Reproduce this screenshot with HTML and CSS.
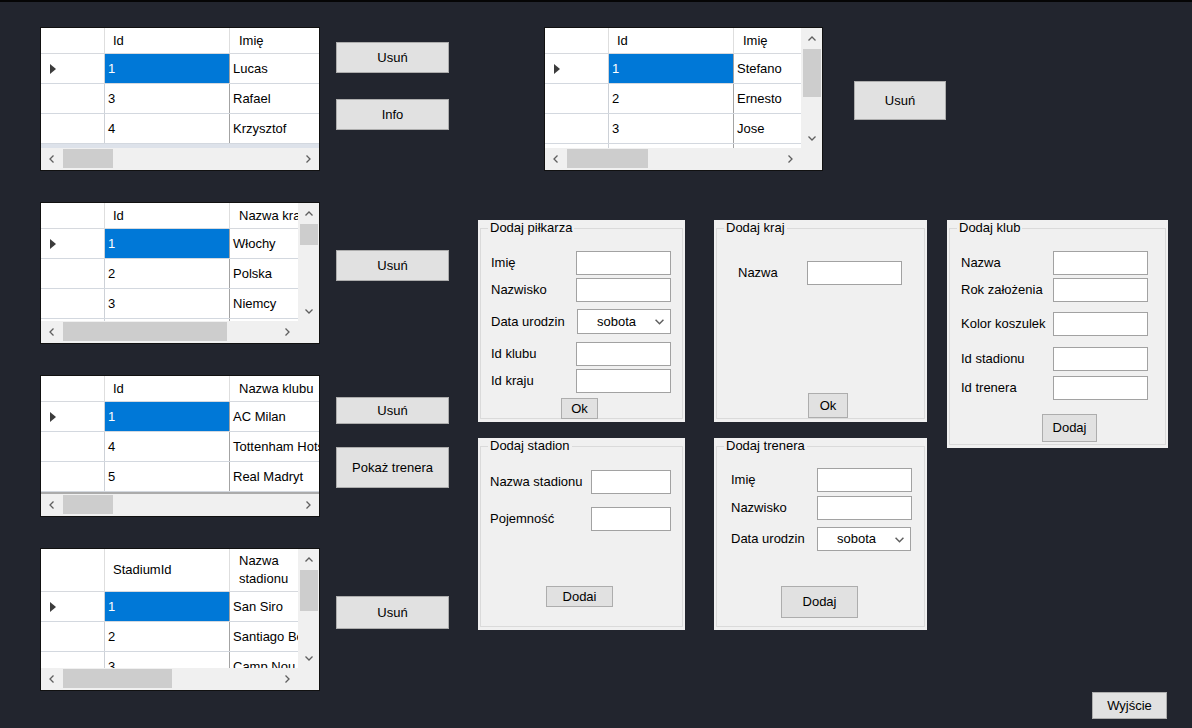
FILE: index.html
```html
<!DOCTYPE html>
<html lang="pl">
<head>
<meta charset="utf-8">
<title>Piłkarze</title>
<link rel="stylesheet" href="styles.css">
</head>
<body>
<svg class="defs" aria-hidden="true">
  <symbol id="chev-l" viewBox="0 0 8 8"><path d="M5.5 0.5L2 4l3.5 3.5" fill="none" stroke="#5f5f5f" stroke-width="1.3"/></symbol>
  <symbol id="chev-r" viewBox="0 0 8 8"><path d="M2.5 0.5L6 4L2.5 7.5" fill="none" stroke="#5f5f5f" stroke-width="1.3"/></symbol>
  <symbol id="chev-u" viewBox="0 0 8 8"><path d="M0.5 5.5L4 2l3.5 3.5" fill="none" stroke="#5f5f5f" stroke-width="1.3"/></symbol>
  <symbol id="chev-d" viewBox="0 0 8 8"><path d="M0.5 2.5L4 6l3.5-3.5" fill="none" stroke="#5f5f5f" stroke-width="1.3"/></symbol>
</svg>
<div class="form">
  <div class="col-grids">
    <div class="grid grid-players">
      <div class="grid-main">
        <div class="grid-view">
          <div class="gr gr-head"><div class="gc gc-rh"></div><div class="gc gc-id">Id</div><div class="gc gc-name">Imię</div></div>
          <div class="gr"><div class="gc gc-rh"><span class="cur"></span></div><div class="gc gc-id sel">1</div><div class="gc gc-name">Lucas</div></div>
          <div class="gr"><div class="gc gc-rh"></div><div class="gc gc-id">3</div><div class="gc gc-name">Rafael</div></div>
          <div class="gr"><div class="gc gc-rh"></div><div class="gc gc-id">4</div><div class="gc gc-name">Krzysztof</div></div>
          <div class="gr gr-partial"><div class="gc gc-rh"></div><div class="gc gc-id"></div><div class="gc gc-name"></div></div>
        </div>
      </div>
      <div class="hscroll">
        <span class="sb-btn"><svg><use href="#chev-l"/></svg></span>
        <div class="htrack"><div class="hthumb w50"></div></div>
        <span class="sb-btn"><svg><use href="#chev-r"/></svg></span>
      </div>
    </div>

    <div class="grid grid-countries">
      <div class="grid-main">
        <div class="grid-view">
          <div class="gr gr-head"><div class="gc gc-rh"></div><div class="gc gc-id">Id</div><div class="gc gc-name">Nazwa kraju</div></div>
          <div class="gr"><div class="gc gc-rh"><span class="cur"></span></div><div class="gc gc-id sel">1</div><div class="gc gc-name">Włochy</div></div>
          <div class="gr"><div class="gc gc-rh"></div><div class="gc gc-id">2</div><div class="gc gc-name">Polska</div></div>
          <div class="gr"><div class="gc gc-rh"></div><div class="gc gc-id">3</div><div class="gc gc-name">Niemcy</div></div>
          <div class="gr"><div class="gc gc-rh"></div><div class="gc gc-id"></div><div class="gc gc-name"></div></div>
        </div>
        <div class="vscroll">
          <span class="sb-btn"><svg><use href="#chev-u"/></svg></span>
          <div class="vtrack"><div class="vthumb h21"></div></div>
          <span class="sb-btn"><svg><use href="#chev-d"/></svg></span>
        </div>
      </div>
      <div class="hscroll">
        <span class="sb-btn"><svg><use href="#chev-l"/></svg></span>
        <div class="htrack"><div class="hthumb w164"></div></div>
        <span class="sb-btn"><svg><use href="#chev-r"/></svg></span>
        <span class="sb-corner"></span>
      </div>
    </div>

    <div class="grid grid-clubs">
      <div class="grid-main">
        <div class="grid-view">
          <div class="gr gr-head"><div class="gc gc-rh"></div><div class="gc gc-id">Id</div><div class="gc gc-name">Nazwa klubu</div></div>
          <div class="gr"><div class="gc gc-rh"><span class="cur"></span></div><div class="gc gc-id sel">1</div><div class="gc gc-name">AC Milan</div></div>
          <div class="gr"><div class="gc gc-rh"></div><div class="gc gc-id">4</div><div class="gc gc-name">Tottenham Hotspur</div></div>
          <div class="gr"><div class="gc gc-rh"></div><div class="gc gc-id">5</div><div class="gc gc-name">Real Madryt</div></div>
        </div>
      </div>
      <div class="hscroll">
        <span class="sb-btn"><svg><use href="#chev-l"/></svg></span>
        <div class="htrack"><div class="hthumb w50"></div></div>
        <span class="sb-btn"><svg><use href="#chev-r"/></svg></span>
      </div>
    </div>

    <div class="grid grid-stadiums">
      <div class="grid-main">
        <div class="grid-view">
          <div class="gr gr-head gr-tall"><div class="gc gc-rh"></div><div class="gc gc-id">StadiumId</div><div class="gc gc-name two-line">Nazwa<br>stadionu</div></div>
          <div class="gr"><div class="gc gc-rh"><span class="cur"></span></div><div class="gc gc-id sel">1</div><div class="gc gc-name">San Siro</div></div>
          <div class="gr"><div class="gc gc-rh"></div><div class="gc gc-id">2</div><div class="gc gc-name">Santiago Bernabeu</div></div>
          <div class="gr"><div class="gc gc-rh"></div><div class="gc gc-id">3</div><div class="gc gc-name">Camp Nou</div></div>
        </div>
        <div class="vscroll">
          <span class="sb-btn"><svg><use href="#chev-u"/></svg></span>
          <div class="vtrack"><div class="vthumb h41"></div></div>
          <span class="sb-btn"><svg><use href="#chev-d"/></svg></span>
        </div>
      </div>
      <div class="hscroll">
        <span class="sb-btn"><svg><use href="#chev-l"/></svg></span>
        <div class="htrack"><div class="hthumb w109"></div></div>
        <span class="sb-btn"><svg><use href="#chev-r"/></svg></span>
        <span class="sb-corner"></span>
      </div>
    </div>
  </div>

  <div class="col-buttons">
    <button class="btn mt15 h31">Usuń</button>
    <button class="btn mt26 h31">Info</button>
    <button class="btn mt120 h31">Usuń</button>
    <button class="btn mt116 h27">Usuń</button>
    <button class="btn mt23 h41">Pokaż trenera</button>
    <button class="btn mt108 h33">Usuń</button>
  </div>

  <div class="col-right">
    <div class="top-row">
      <div class="grid grid-coaches">
        <div class="grid-main">
          <div class="grid-view">
            <div class="gr gr-head"><div class="gc gc-rh"></div><div class="gc gc-id">Id</div><div class="gc gc-name">Imię</div></div>
            <div class="gr"><div class="gc gc-rh"><span class="cur"></span></div><div class="gc gc-id sel">1</div><div class="gc gc-name">Stefano</div></div>
            <div class="gr"><div class="gc gc-rh"></div><div class="gc gc-id">2</div><div class="gc gc-name">Ernesto</div></div>
            <div class="gr"><div class="gc gc-rh"></div><div class="gc gc-id">3</div><div class="gc gc-name">Jose</div></div>
            <div class="gr"><div class="gc gc-rh"></div><div class="gc gc-id"></div><div class="gc gc-name"></div></div>
          </div>
          <div class="vscroll">
            <span class="sb-btn"><svg><use href="#chev-u"/></svg></span>
            <div class="vtrack"><div class="vthumb h48"></div></div>
            <span class="sb-btn"><svg><use href="#chev-d"/></svg></span>
          </div>
        </div>
        <div class="hscroll">
          <span class="sb-btn"><svg><use href="#chev-l"/></svg></span>
          <div class="htrack"><div class="hthumb w81"></div></div>
          <span class="sb-btn"><svg><use href="#chev-r"/></svg></span>
          <span class="sb-corner"></span>
        </div>
      </div>
      <button class="btn btn-del-coach">Usuń</button>
    </div>

    <div class="groups">
      <section class="gb gb-player">
        <div class="gb-frame">
          <div class="gb-title">Dodaj piłkarza</div>
          <div class="gb-body f-player">
            <div class="frow mt15"><span class="lbl">Imię</span><span class="tb"></span></div>
            <div class="frow mt3"><span class="lbl">Nazwisko</span><span class="tb"></span></div>
            <div class="frow mt7"><span class="lbl">Data urodzin</span><span class="combo c25 c-shift">sobota<svg><use href="#chev-d"/></svg></span></div>
            <div class="frow mt8"><span class="lbl">Id klubu</span><span class="tb"></span></div>
            <div class="frow mt3"><span class="lbl">Id kraju</span><span class="tb"></span></div>
            <button class="btn fbtn mt5 ml70 b-ok1">Ok</button>
          </div>
        </div>
      </section>

      <section class="gb gb-country">
        <div class="gb-frame">
          <div class="gb-title">Dodaj kraj</div>
          <div class="gb-body f-country">
            <div class="frow mt25"><span class="lbl">Nazwa</span><span class="tb"></span></div>
            <button class="btn fbtn mt108 ml70 b-ok2">Ok</button>
          </div>
        </div>
      </section>

      <section class="gb gb-club">
        <div class="gb-frame">
          <div class="gb-title">Dodaj klub</div>
          <div class="gb-body f-club">
            <div class="frow mt15"><span class="lbl">Nazwa</span><span class="tb"></span></div>
            <div class="frow mt3"><span class="lbl">Rok założenia</span><span class="tb"></span></div>
            <div class="frow mt10"><span class="lbl">Kolor koszulek</span><span class="tb"></span></div>
            <div class="frow mt11"><span class="lbl">Id stadionu</span><span class="tb"></span></div>
            <div class="frow mt5"><span class="lbl">Id trenera</span><span class="tb"></span></div>
            <button class="btn fbtn mt14 ml81 b-club">Dodaj</button>
          </div>
        </div>
      </section>

      <section class="gb gb-stadium">
        <div class="gb-frame">
          <div class="gb-title">Dodaj stadion</div>
          <div class="gb-body f-stadium">
            <div class="frow mt16"><span class="lbl">Nazwa stadionu</span><span class="tb tb-s"></span></div>
            <div class="frow mt13"><span class="lbl">Pojemność</span><span class="tb tb-s"></span></div>
            <button class="btn fbtn mt55 ml56 b-stadium">Dodai</button>
          </div>
        </div>
      </section>

      <section class="gb gb-coach">
        <div class="gb-frame">
          <div class="gb-title">Dodaj trenera</div>
          <div class="gb-body f-coach">
            <div class="frow mt14"><span class="lbl">Imię</span><span class="tb"></span></div>
            <div class="frow mt4"><span class="lbl">Nazwisko</span><span class="tb"></span></div>
            <div class="frow mt7"><span class="lbl">Data urodzin</span><span class="combo">sobota<svg><use href="#chev-d"/></svg></span></div>
            <button class="btn fbtn mt35 ml50 b-coach">Dodaj</button>
          </div>
        </div>
      </section>
    </div>

    <div class="footer">
      <button class="btn btn-exit">Wyjście</button>
    </div>
  </div>
</div>
</body>
</html>
```

FILE: styles.css
```css
* { box-sizing: border-box; }

html, body {
  margin: 0;
  padding: 0;
}

body {
  width: 1192px;
  height: 728px;
  overflow: hidden;
  background: #22252e;
  color: #000;
  font: 13px/16px "Liberation Sans", Arial, sans-serif;
}

.defs {
  position: absolute;
  width: 0;
  height: 0;
  overflow: hidden;
}

.form {
  display: flex;
  align-items: flex-start;
  height: 728px;
  border-top: 2px solid #050505;
  padding: 25px 0 0 40px;
}

/* ---------- data grids ---------- */
.col-grids {
  width: 280px;
  display: flex;
  flex-direction: column;
}

.grid {
  display: flex;
  flex-direction: column;
  border: 1px solid #111;
  background: #fff;
  overflow: hidden;
}

.grid-players { height: 144px; }
.grid-countries { height: 142px; margin-top: 31px; }
.grid-clubs { height: 142px; margin-top: 31px; }
.grid-stadiums { height: 143px; margin-top: 31px; }

.grid-main {
  flex: 1;
  min-height: 0;
  display: flex;
}

.grid-view {
  flex: 1;
  min-width: 0;
  overflow: hidden;
  background: #fff;
}

.grid-clubs .grid-view { background: #ababab; }

.gr {
  display: flex;
  height: 30px;
  border-bottom: 1px solid #d3d8df;
  background: #fff;
}

.gr-partial { background: #dde2ea; }
.gr-partial .gc { border-right-color: #dde2ea; }

.gr-head { height: 26px; border-bottom-color: #d6d9de; }
.gr-tall { height: 43px; }

.gc {
  flex: none;
  display: flex;
  align-items: center;
  padding-left: 3px;
  white-space: nowrap;
  overflow: hidden;
  border-right: 1px solid #a3a3a3;
}

.gc-rh { width: 64px; padding-left: 9px; border-right-color: #cdd1d7; }
.gc-id { width: 125px; }
.gc-name { width: 300px; border-right: none; }

.gr-head .gc { padding-left: 8px; border-right-color: #dedede; }
.gr-head .gc-name { padding-left: 9px; }

.two-line { line-height: 18px; }

.sel { background: #0078d7; color: #fff; }

.cur {
  width: 0;
  height: 0;
  border-left: 6px solid #3c3c3c;
  border-top: 5px solid transparent;
  border-bottom: 5px solid transparent;
}

/* scrollbars */
.hscroll {
  flex: none;
  height: 22px;
  display: flex;
  background: #f0f0f0;
}

.sb-btn {
  flex: none;
  width: 22px;
  display: flex;
  align-items: center;
  justify-content: center;
}

.sb-btn svg { width: 8px; height: 8px; }

.htrack { flex: 1; padding: 1px 0 2px; }
.hthumb { height: 100%; background: #cdcdcd; }
.w50 { width: 50px; }
.w81 { width: 81px; }
.w109 { width: 109px; }
.w164 { width: 164px; }

.sb-corner { flex: none; width: 21px; }

.vscroll {
  flex: none;
  width: 21px;
  display: flex;
  flex-direction: column;
  background: #f0f0f0;
}

.vscroll .sb-btn { width: auto; height: 21px; }
.vtrack { flex: 1; padding: 0 1px 0 2px; }
.vthumb { background: #cdcdcd; }
.h21 { height: 21px; }
.h41 { height: 41px; }
.h48 { height: 48px; }

/* ---------- buttons ---------- */
.btn {
  display: flex;
  align-items: center;
  justify-content: center;
  padding: 0;
  margin: 0;
  background: #e1e1e1;
  border: 1px solid #adadad;
  color: #000;
  font: inherit;
  white-space: nowrap;
}

.col-buttons {
  width: 113px;
  margin-left: 16px;
  display: flex;
  flex-direction: column;
}

.col-buttons .btn { width: 113px; }

.h27 { height: 27px; }
.h31 { height: 31px; }
.h33 { height: 33px; }
.h41 { height: 41px; }

.mt3 { margin-top: 3px; }
.mt4 { margin-top: 4px; }
.mt5 { margin-top: 5px; }
.mt7 { margin-top: 7px; }
.mt8 { margin-top: 8px; }
.mt10 { margin-top: 10px; }
.mt11 { margin-top: 11px; }
.mt13 { margin-top: 13px; }
.mt14 { margin-top: 14px; }
.mt15 { margin-top: 15px; }
.mt16 { margin-top: 16px; }
.mt23 { margin-top: 23px; }
.mt25 { margin-top: 25px; }
.mt26 { margin-top: 26px; }
.mt35 { margin-top: 35px; }
.mt55 { margin-top: 55px; }
.mt108 { margin-top: 108px; }
.mt116 { margin-top: 116px; }
.mt120 { margin-top: 120px; }

.ml50 { margin-left: 50px; }
.ml56 { margin-left: 56px; }
.ml70 { margin-left: 70px; }
.ml81 { margin-left: 81px; }

/* ---------- right side ---------- */
.col-right {
  width: 690px;
  margin-left: 29px;
  display: flex;
  flex-direction: column;
}

.top-row {
  display: flex;
  align-items: flex-start;
}

.grid-coaches {
  width: 279px;
  height: 144px;
  margin-left: 66px;
}

.btn-del-coach {
  width: 92px;
  height: 39px;
  margin: 54px 0 0 31px;
}

.groups {
  margin-top: 49px;
  display: grid;
  grid-template-columns: 207px 29px 213px 20px 221px;
  grid-template-rows: 202px 16px 192px;
}

.gb {
  background: #f0f0f0;
  padding: 8px 2px 3px 2px;
}

.gb-player { grid-column: 1; grid-row: 1; }
.gb-country { grid-column: 3; grid-row: 1; }
.gb-club { grid-column: 5; grid-row: 1 / 4; align-self: start; height: 228px; }
.gb-stadium { grid-column: 1; grid-row: 3; }
.gb-coach { grid-column: 3; grid-row: 3; }

.gb-frame {
  height: 100%;
  border: 1px solid #dadada;
}

.gb-title {
  width: max-content;
  margin: -9px 0 0 7px;
  padding: 0 2px;
  background: #f0f0f0;
  line-height: 16px;
}

.gb-body {
  display: flex;
  flex-direction: column;
  align-items: flex-start;
}

.f-player { padding-left: 10px; --lw: 85px; }
.f-country { padding-left: 21px; --lw: 69px; }
.f-club { padding-left: 11px; --lw: 92px; }
.f-stadium { padding-left: 9px; --lw: 101px; }
.f-coach { padding-left: 14px; --lw: 86px; }

.frow {
  display: flex;
  align-items: center;
}

.lbl {
  width: var(--lw);
  white-space: nowrap;
}

.tb {
  width: 95px;
  height: 24px;
  background: #fff;
  border: 1px solid #a2a2a2;
}

.tb-s { width: 80px; }

.combo {
  width: 94px;
  height: 24px;
  display: flex;
  align-items: center;
  padding-left: 19px;
  background: #fff;
  border: 1px solid #a2a2a2;
}

.c25 { height: 25px; }
.c-shift { margin-left: 1px; }

.combo svg {
  width: 9px;
  height: 9px;
  margin: 0 6px 0 auto;
}

.b-ok1 { width: 37px; height: 21px; }
.b-ok2 { width: 40px; height: 25px; }
.b-club { width: 55px; height: 28px; }
.b-stadium { width: 67px; height: 21px; }
.b-coach { width: 77px; height: 32px; }

.footer {
  display: flex;
  justify-content: flex-end;
  margin-top: 62px;
}

.btn-exit {
  width: 75px;
  height: 27px;
  margin-right: 1px;
}
```
